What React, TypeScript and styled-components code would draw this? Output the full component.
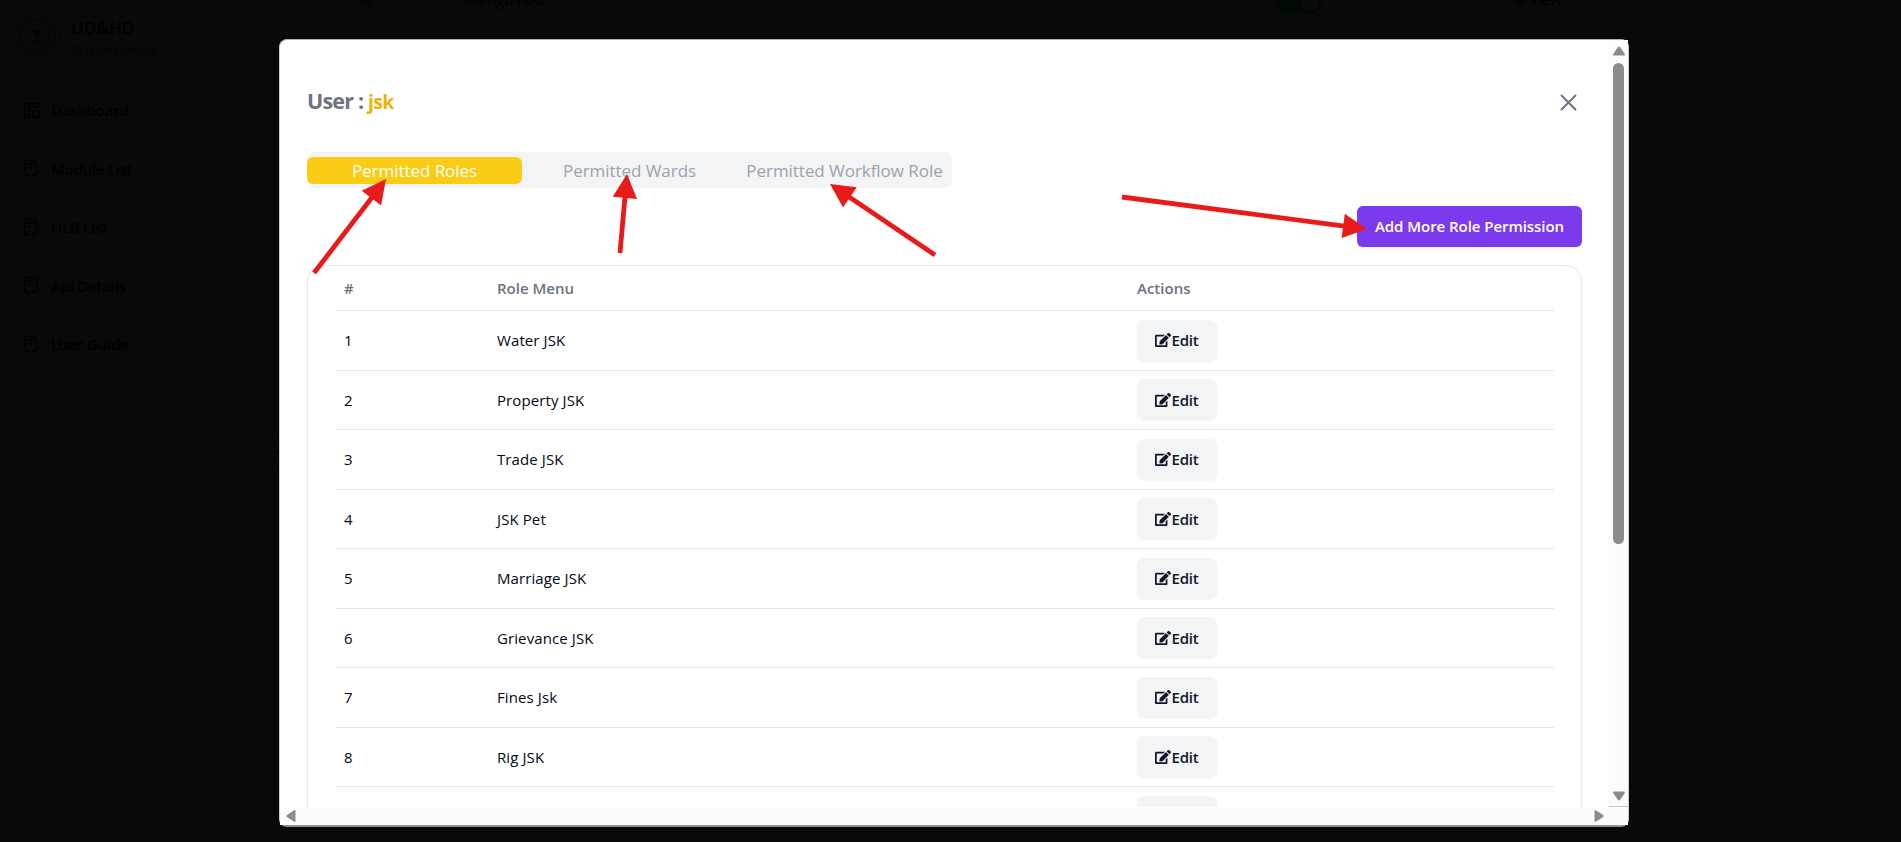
import React from "react";
import styled, { createGlobalStyle } from "styled-components";
import { LuLayoutDashboard, LuEye } from "react-icons/lu";
import { FaEdit } from "react-icons/fa";

const GlobalStyle = createGlobalStyle`
  * { box-sizing: border-box; }
  body { margin: 0; background: #090909; overflow: hidden; font-family: "Open Sans", "Noto Sans", sans-serif; }
  button { font: inherit; border: 0; padding: 0; margin: 0; background: none; }
`;

const Page = styled.div`
  position: relative;
  width: 1901px;
  height: 842px;
  overflow: hidden;
  display: flex;
  background: #090909;
  color: #000;
`;

const Sidebar = styled.aside`
  position: relative;
  width: 279px;
  flex: none;
  padding-top: 12px;
`;

const CollapseHandle = styled.div`
  position: absolute;
  left: 262px;
  top: 434px;
  width: 36px;
  height: 36px;
  border: 1px solid #070707;
  border-radius: 50%;
  display: grid;
  place-items: center;
`;

const Brand = styled.div`
  display: flex;
  height: 50px;
  padding-left: 12px;
  gap: 9px;
`;

const BrandText = styled.div`
  padding-top: 2px;
`;

const BrandName = styled.div`
  font-size: 17px;
  font-weight: 600;
  line-height: 27px;
  letter-spacing: 0.1px;
`;

const BrandSub = styled.div`
  font-size: 12.5px;
  line-height: 20px;
  color: #020202;
`;

const Nav = styled.nav`
  display: flex;
  flex-direction: column;
  padding: 19px 0 0 22px;
`;

const NavItem = styled.a`
  display: flex;
  align-items: center;
  gap: 10px;
  height: 58.5px;
  font-size: 15px;
  font-weight: 600;
  letter-spacing: -0.25px;

  svg { width: 19px; height: 19px; }
`;

const Behind = styled.div`
  flex: 1;
  display: flex;
  height: 16px;
  overflow: hidden;
  font-size: 15px;
  line-height: 20px;
`;

const BehindCell = styled.div<{ $width: number }>`
  width: ${(p) => p.$width}px;
  flex: none;
  display: flex;
  align-items: center;
  height: 20px;
  margin-top: -11px;
  gap: 2px;
`;

const Toggle = styled.div`
  width: 48px;
  height: 24px;
  margin-top: 6px;
  padding: 3px;
  border-radius: 12px;
  background: #000a03;
  display: flex;
  justify-content: flex-end;

  &::after {
    content: "";
    width: 18px;
    height: 18px;
    border-radius: 50%;
    background: #0a0a0a;
  }
`;

const Modal = styled.section`
  position: absolute;
  left: 279px;
  top: 39px;
  width: 1350px;
  height: 788px;
  border: 1px solid #ccc;
  border-top-color: #b5b5b5;
  border-bottom: 2px solid #8f9193;
  border-radius: 8px;
  background: #fff;
  display: grid;
  grid-template-columns: 1fr 19px;
  grid-template-rows: 767px 18px;
`;

const Content = styled.div`
  overflow: hidden;
  padding: 0 27px;
  height: 767px;
`;

const Header = styled.header`
  display: flex;
  justify-content: space-between;
  align-items: center;
  height: 36px;
  margin-top: 44px;
  padding-right: 3px;
`;

const Title = styled.h1`
  margin: -2px 0 0;
  font-size: 21.5px;
  line-height: 32px;
  font-weight: 700;
  letter-spacing: -0.8px;
  color: #6b7280;
`;

const UserName = styled.span`
  font-size: 19.5px;
  letter-spacing: -0.7px;
  color: #eab308;
`;

const Close = styled.button`
  width: 22px;
  height: 22px;
  display: grid;
  place-items: center;
  color: #6b7280;
`;

const Tabs = styled.div`
  display: flex;
  align-items: center;
  width: 645px;
  height: 36px;
  margin-top: 32px;
  border-radius: 8px;
  background: #f3f4f6;
`;

const Tab = styled.button<{ $active?: boolean }>`
  width: 215px;
  height: 27px;
  border-radius: 6px;
  font-size: 17px;
  line-height: 27px;
  letter-spacing: -0.05px;
  white-space: nowrap;
  color: ${(p) => (p.$active ? "#fff" : "#9ca3af")};
  background: ${(p) => (p.$active ? "#facc15" : "transparent")};
`;

const Toolbar = styled.div`
  display: flex;
  justify-content: flex-end;
  padding: 18px 0;
`;

const AddButton = styled.button`
  width: 225px;
  height: 41px;
  padding-bottom: 2px;
  border-radius: 6px;
  background: #7c3aed;
  color: #fff;
  font-size: 15px;
  font-weight: 600;
  letter-spacing: -0.05px;
  white-space: nowrap;
  box-shadow: 0 1px 2px rgba(0, 0, 0, 0.08);
`;

const Card = styled.div`
  height: 700px;
  padding: 0 27px;
  border: 1px solid #e5e7eb;
  border-radius: 16px;
  box-shadow: 0 1px 2px rgba(0, 0, 0, 0.06);
`;

const Row = styled.div<{ $head?: boolean }>`
  display: grid;
  grid-template-columns: 153px 640px 1fr;
  align-items: center;
  height: ${(p) => (p.$head ? 45 : 59.5)}px;
  padding-left: 9px;
  border-bottom: 1px solid #e5e7eb;
  font-size: 15px;
  font-weight: ${(p) => (p.$head ? 600 : 400)};
  letter-spacing: ${(p) => (p.$head ? 0 : 0.1)}px;
  color: ${(p) => (p.$head ? "#6b7280" : "#020817")};
`;

const EditButton = styled.button`
  width: 80px;
  height: 41px;
  border-radius: 7px;
  display: flex;
  align-items: center;
  justify-content: center;
  background: #f3f4f6;
  color: #0f172a;
  font-size: 15px;
  font-weight: 600;
  letter-spacing: -0.2px;
  box-shadow: 0 1px 2px rgba(0, 0, 0, 0.05);
`;

const VerticalBar = styled.div`
  display: flex;
  flex-direction: column;
  align-items: center;
  height: 767px;
  padding: 6px 0 5px;
  background: #fcfcfc;
  border-bottom: 1px solid #c4c4c4;
`;

const Thumb = styled.div`
  width: 11px;
  height: 481px;
  margin-top: 7px;
  border-radius: 6px;
  background: #8b8b8b;
`;

const Spacer = styled.div`
  flex: 1;
`;

const HorizontalBar = styled.div`
  grid-column: 1 / -1;
  display: flex;
  align-items: center;
  justify-content: space-between;
  padding: 0 24px 0 6px;
  background: #fcfcfc;
`;

const Annotations = styled.svg`
  position: absolute;
  inset: 0;
  pointer-events: none;
`;

const Seal = () => (
  <svg width="50" height="50" viewBox="0 0 50 50" fill="none" stroke="#030706">
    <circle cx="25" cy="25" r="23.5" />
    <circle cx="25" cy="25" r="17.5" strokeWidth="3" strokeDasharray="2 1.5" />
    <circle cx="25" cy="25" r="12" stroke="#050505" />
    <circle cx="25" cy="21" r="3.5" fill="#030303" />
    <path d="M21 28h8v4h-8z" fill="#030303" />
  </svg>
);

const ListIcon = () => (
  <svg viewBox="0 0 19 19" fill="none" stroke="currentColor" strokeWidth="1.6" strokeLinecap="round" strokeLinejoin="round">
    <path d="M7.500 16.500H5a2 2 0 0 1-2-2v-11a2 2 0 0 1 2-2h7.500a2 2 0 0 1 2 2V11M6 5h5.500M6 8.500h3M10.500 15l2 2 4-4" />
  </svg>
);

const ScrollArrow = ({ angle }: { angle: number }) => {
  const sideways = angle % 180 !== 0;
  return (
    <svg width={sideways ? 10 : 12} height={sideways ? 12 : 10} viewBox={sideways ? "1 -1 10 12" : "0 0 12 10"}>
      <path
        d="M6 .5Q6.700 .5 7.200 1.300L11.600 7.800Q12.500 9.500 11 9.500H1Q-.5 9.500 .4 7.800L4.800 1.300Q5.300 .5 6 .5Z"
        fill="#8b8b8b"
        transform={`rotate(${angle} 6 5)`}
      />
    </svg>
  );
};

const Arrow = ({ from, to }: { from: [number, number]; to: [number, number] }) => {
  const dx = to[0] - from[0];
  const dy = to[1] - from[1];
  const length = Math.hypot(dx, dy);
  const angle = (Math.atan2(dy, dx) * 180) / Math.PI;
  return (
    <g transform={`translate(${from[0]} ${from[1]}) rotate(${angle})`} fill="#e81b1b">
      <rect y="-2.400" width={length - 21} height="4.800" />
      <path d={`M${length} 0L${length - 24} -12.200V12.200Z`} />
    </g>
  );
};

const navItems = ["Dashboard", "Module List", "ULB List", "Api Details", "User Guide"];
const roles = ["Water JSK", "Property JSK", "Trade JSK", "JSK Pet", "Marriage JSK", "Grievance JSK", "Fines Jsk", "Rig JSK"];

export default function App() {
  return (
    <Page>
      <GlobalStyle />
      <Sidebar>
        <Brand>
          <Seal />
          <BrandText>
            <BrandName>UD&amp;HD</BrandName>
            <BrandSub>Master Control</BrandSub>
          </BrandText>
        </Brand>
        <Nav>
          {navItems.map((name, i) => (
            <NavItem key={name}>
              {i === 0 ? <LuLayoutDashboard /> : <ListIcon />}
              {name}
            </NavItem>
          ))}
        </Nav>
        <CollapseHandle>
          <svg width="10" height="12" viewBox="0 0 10 12" fill="none" stroke="#000" strokeWidth="2">
            <path d="M7 1L2 6l5 5" />
          </svg>
        </CollapseHandle>
      </Sidebar>
      <Behind>
        <BehindCell $width={77} />
        <BehindCell $width={109}>38</BehindCell>
        <BehindCell $width={809}>Mango NAC</BehindCell>
        <BehindCell $width={238}><Toggle /></BehindCell>
        <BehindCell $width={80}><LuEye />View</BehindCell>
      </Behind>
      <Modal>
        <Content>
          <Header>
            <Title>User : <UserName>jsk</UserName></Title>
            <Close aria-label="Close">
              <svg width="17" height="17" viewBox="0 0 17 17" fill="none" stroke="currentColor" strokeWidth="1.900" strokeLinecap="round">
                <path d="M1.500 1.500l14 14M15.500 1.500l-14 14" />
              </svg>
            </Close>
          </Header>
          <Tabs>
            <Tab $active>Permitted Roles</Tab>
            <Tab>Permitted Wards</Tab>
            <Tab>Permitted Workflow Role</Tab>
          </Tabs>
          <Toolbar>
            <AddButton>Add More Role Permission</AddButton>
          </Toolbar>
          <Card>
            <Row $head>
              <span>#</span>
              <span>Role Menu</span>
              <span>Actions</span>
            </Row>
            {roles.map((role, i) => (
              <Row key={role}>
                <span>{i + 1}</span>
                <span>{role}</span>
                <EditButton><FaEdit size={16} />Edit</EditButton>
              </Row>
            ))}
            <Row>
              <span />
              <span />
              <EditButton />
            </Row>
          </Card>
        </Content>
        <VerticalBar>
          <ScrollArrow angle={0} />
          <Thumb />
          <Spacer />
          <ScrollArrow angle={180} />
        </VerticalBar>
        <HorizontalBar>
          <ScrollArrow angle={270} />
          <ScrollArrow angle={90} />
        </HorizontalBar>
      </Modal>
      <Annotations width="1901" height="842">
        <Arrow from={[314, 273]} to={[386, 179]} />
        <Arrow from={[620, 253]} to={[627, 174]} />
        <Arrow from={[935, 255]} to={[830, 184]} />
        <Arrow from={[1122, 197]} to={[1367, 229]} />
      </Annotations>
    </Page>
  );
}
